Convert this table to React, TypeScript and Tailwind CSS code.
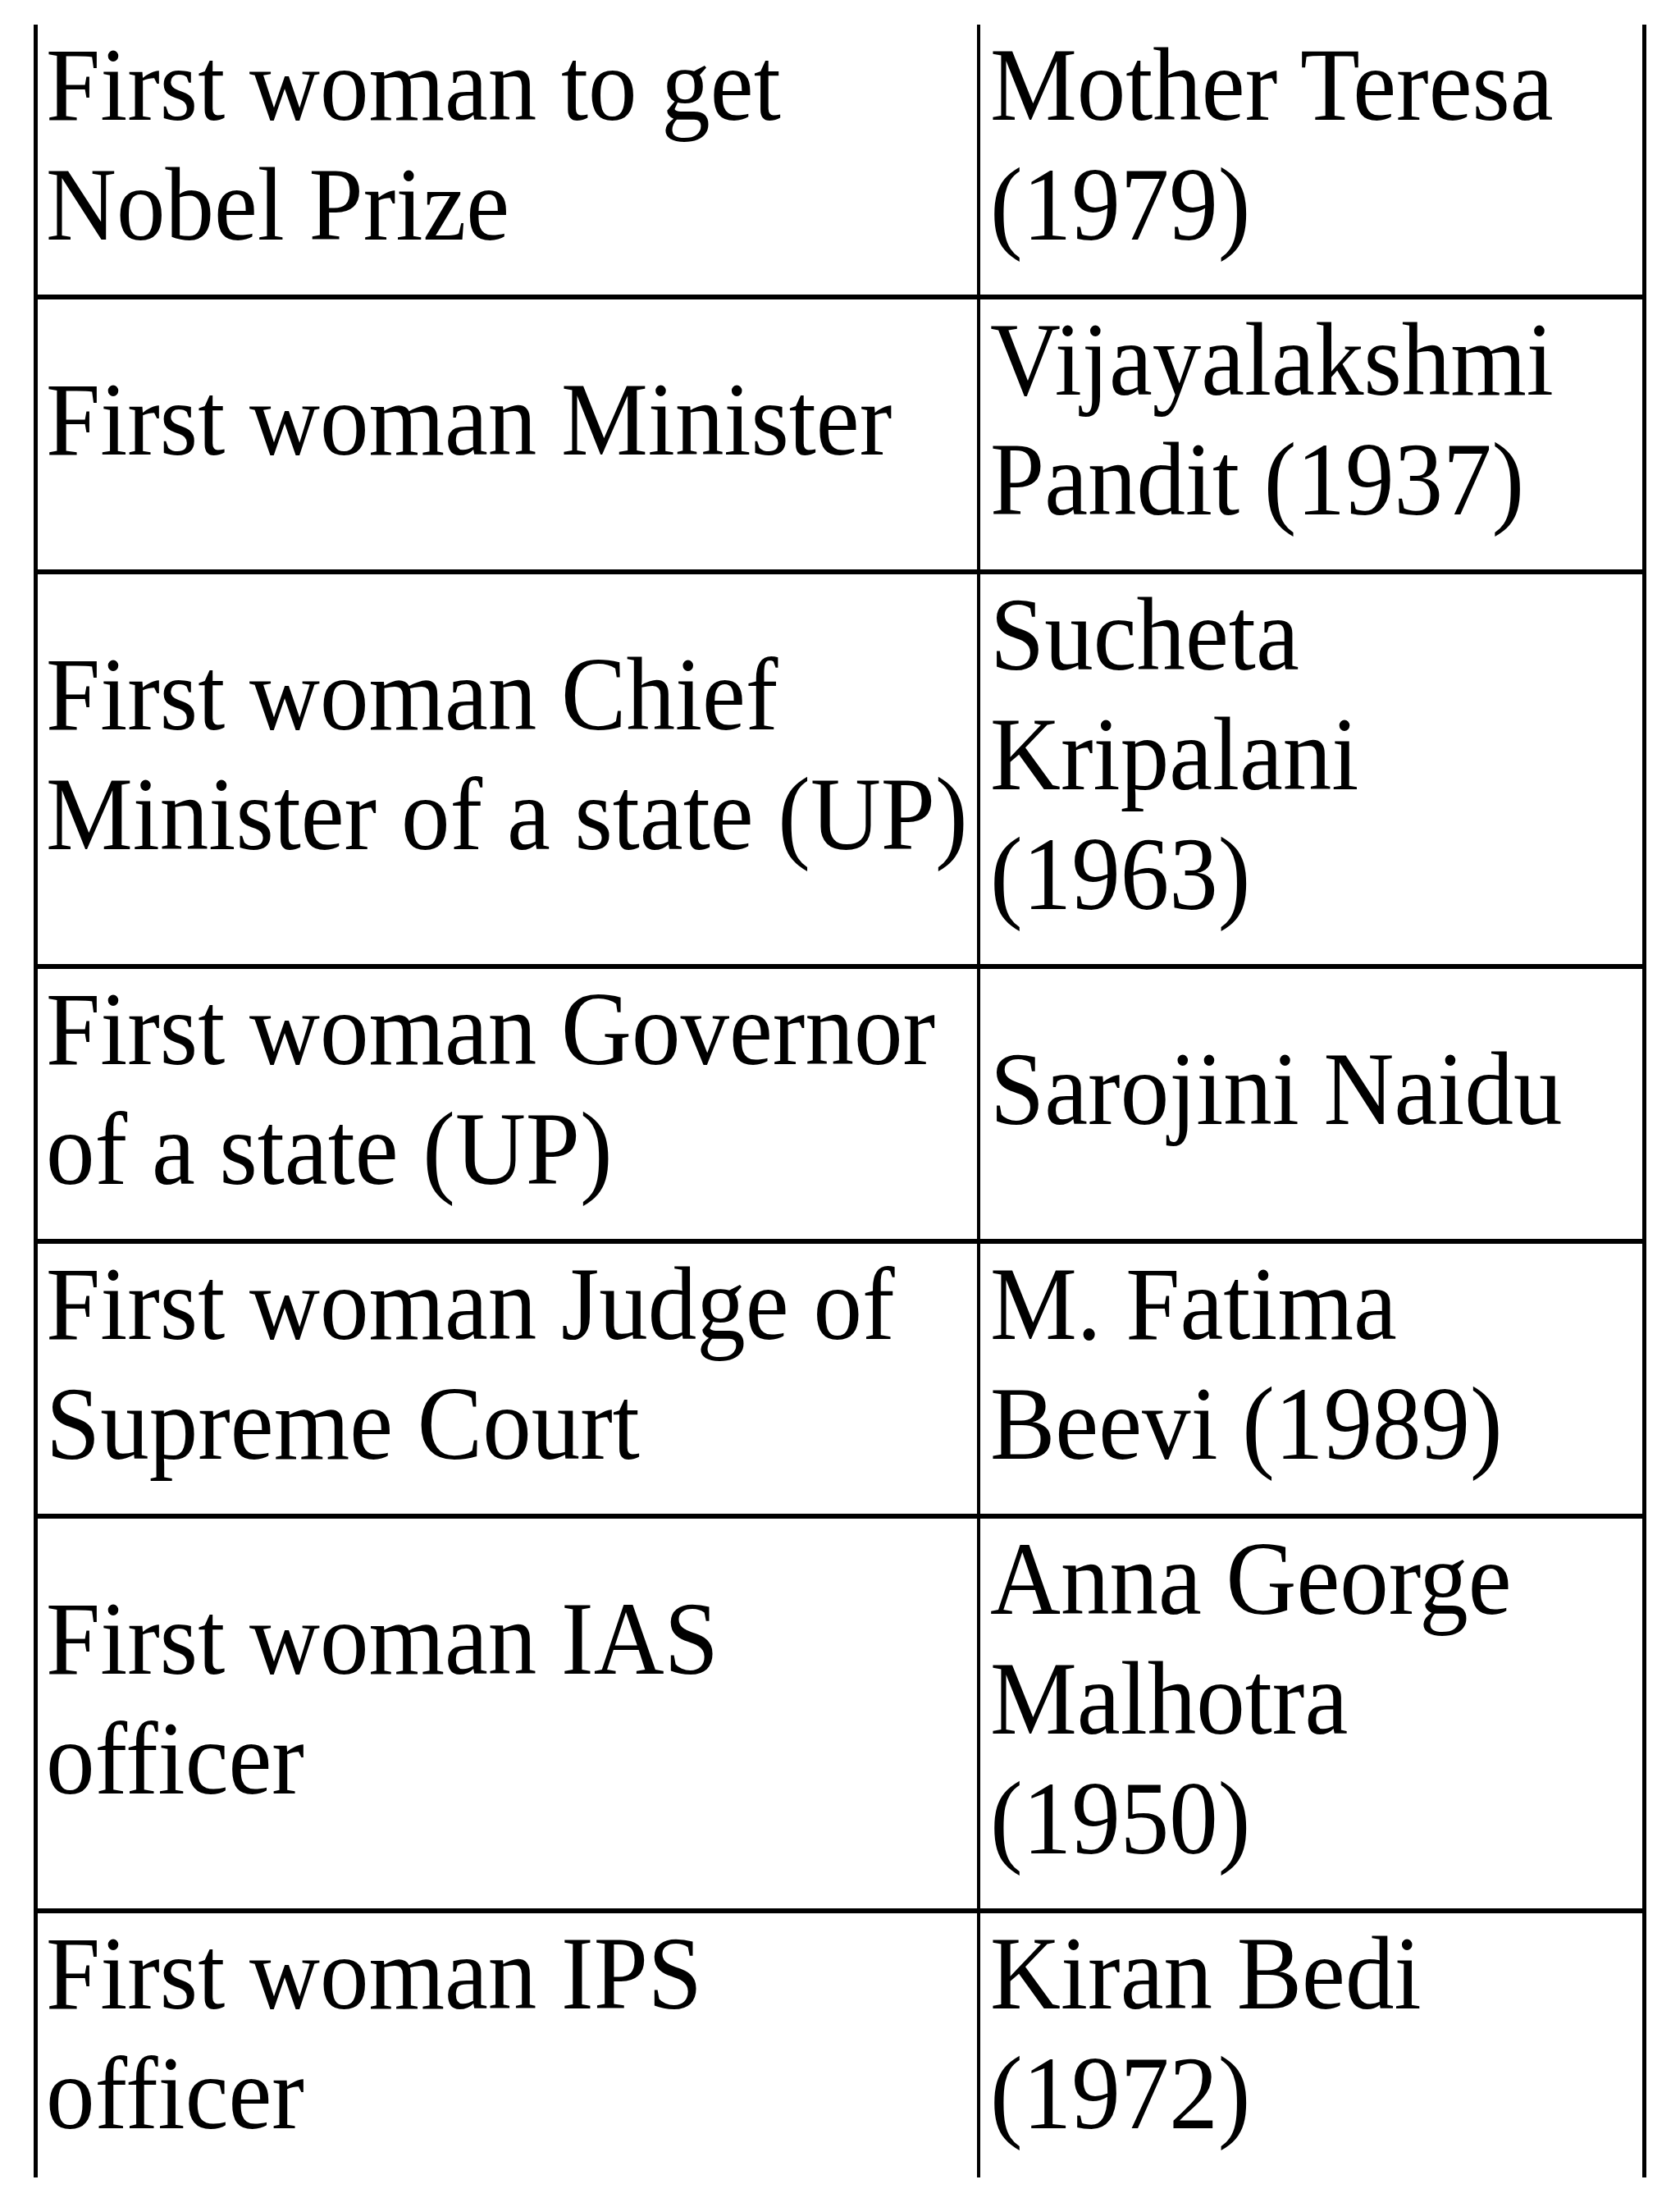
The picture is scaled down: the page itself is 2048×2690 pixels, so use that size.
const rows: { left: string[]; right: string[] }[] = [
  { left: ["First woman to get", "Nobel Prize"], right: ["Mother Teresa", "(1979)"] },
  { left: ["First woman Minister"], right: ["Vijayalakshmi", "Pandit (1937)"] },
  { left: ["First woman Chief", "Minister of a state (UP)"], right: ["Sucheta", "Kripalani", "(1963)"] },
  { left: ["First woman Governor", "of a state (UP)"], right: ["Sarojini Naidu"] },
  { left: ["First woman Judge of", "Supreme Court"], right: ["M. Fatima", "Beevi (1989)"] },
  { left: ["First woman IAS", "officer"], right: ["Anna George", "Malhotra", "(1950)"] },
  { left: ["First woman IPS", "officer"], right: ["Kiran Bedi", "(1972)"] },
];

function Cell({ lines, className }: { lines: string[]; className: string }) {
  return (
    <div className={`flex items-center pt-[3px] ${className}`}>
      <div>
        {lines.map((l) => (
          <div key={l} className="whitespace-nowrap">
            {/* the source text is a little taller than plain Times */}
            <span className="inline-block origin-[50%_78%] scale-y-107">{l}</span>
          </div>
        ))}
      </div>
    </div>
  );
}

export default function App() {
  return (
    <div className="min-h-[2690px] w-[2048px] bg-white pl-[41px] pt-[30px] text-black">
      <div
        className="w-[1966px] border-l-[5px] border-r-[5px] border-black text-[119px] leading-[146px]"
        style={{ fontFamily: '"Liberation Serif", "Times New Roman", serif' }}
      >
        {rows.map((r, i) => {
          const last = i === rows.length - 1;
          return (
            <div
              key={i}
              className={`grid grid-cols-[1149px_1fr] ${i > 0 ? "border-t-[6px] border-black" : ""}`}
            >
              <Cell
                lines={r.left}
                className={`border-r-[4px] border-black pl-[10px] ${last ? "pb-[27px]" : "pb-[34px]"}`}
              />
              <Cell lines={r.right} className={`pl-[12px] ${last ? "pb-[27px]" : "pb-[34px]"}`} />
            </div>
          );
        })}
      </div>
    </div>
  );
}
